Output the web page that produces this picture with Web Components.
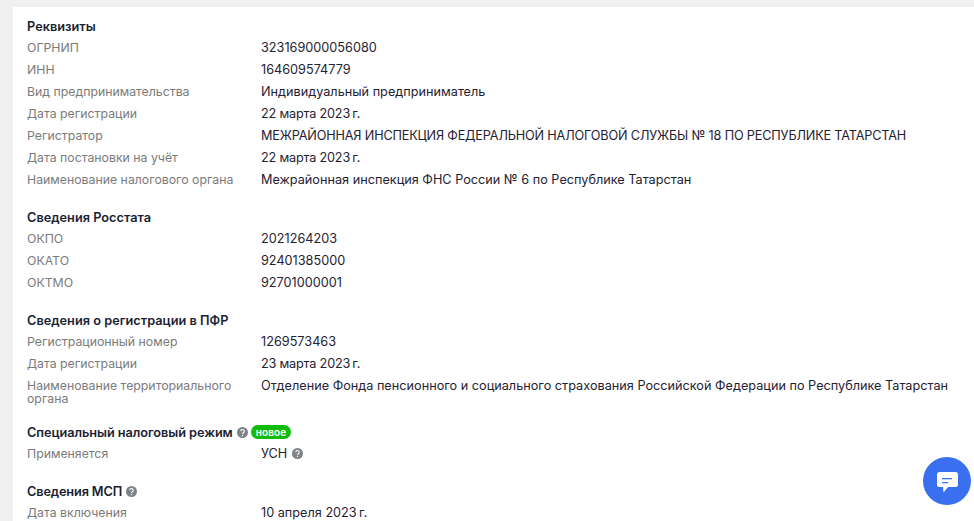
<!DOCTYPE html>
<html lang="ru">
<head>
<meta charset="utf-8">
<title>Реквизиты</title>
<style>
  html, body { margin: 0; height: 521px; overflow: hidden; background: #f0f0f0; }
  body { padding: 7px 0 0 13px; box-sizing: border-box; font-family: Inter, "Noto Sans", sans-serif; }
  .fecha { letter-spacing: -.2px; }
</style>
</head>
<body>
<info-card>
  <info-section titulo="Реквизиты">
    <info-row label="ОГРНИП">323169000056080</info-row>
    <info-row label="ИНН">164609574779</info-row>
    <info-row label="Вид предпринимательства">Индивидуальный предприниматель</info-row>
    <info-row label="Дата регистрации"><span class="fecha">22 марта 2023&#8201;г.</span></info-row>
    <info-row label="Регистратор"><span style="letter-spacing:-.17px">МЕЖРАЙОННАЯ ИНСПЕКЦИЯ ФЕДЕРАЛЬНОЙ НАЛОГОВОЙ СЛУЖБЫ № 18 ПО РЕСПУБЛИКЕ ТАТАРСТАН</span></info-row>
    <info-row label="Дата постановки на учёт"><span class="fecha">22 марта 2023&#8201;г.</span></info-row>
    <info-row label="Наименование налогового органа">Межрайонная инспекция ФНС России № 6 по Республике Татарстан</info-row>
  </info-section>
  <info-section titulo="Сведения Росстата">
    <info-row label="ОКПО">2021264203</info-row>
    <info-row label="ОКАТО">92401385000</info-row>
    <info-row label="ОКТМО">92701000001</info-row>
  </info-section>
  <info-section titulo="Сведения о регистрации в ПФР">
    <info-row label="Регистрационный номер">1269573463</info-row>
    <info-row label="Дата регистрации"><span class="fecha">23 марта 2023&#8201;г.</span></info-row>
    <info-row compacto label="Наименование территориального органа">Отделение Фонда пенсионного и социального страхования Российской Федерации по Республике Татарстан</info-row>
  </info-section>
  <info-section titulo="Специальный налоговый режим" style="--titulo-tracking:-.07px">
    <hint-icon slot="extra"></hint-icon>
    <new-badge slot="extra">новое</new-badge>
    <info-row label="Применяется">УСН <hint-icon></hint-icon></info-row>
  </info-section>
  <info-section titulo="Сведения МСП" style="--titulo-tracking:-.15px">
    <hint-icon slot="extra"></hint-icon>
    <info-row label="Дата включения">10 апреля 2023&#8201;г.</info-row>
  </info-section>
</info-card>
<chat-button></chat-button>

<script>
class InfoCard extends HTMLElement {
  constructor() {
    super();
    this.attachShadow({ mode: 'open' });
    this.shadowRoot.innerHTML = `
      <style>
        :host {
          display: flex;
          flex-direction: column;
          gap: 17px;
          background: #fff;
          height: 514px;
          padding: 9px 0 0 14px;
          box-sizing: border-box;
          overflow: hidden;
        }
      </style>
      <slot></slot>
    `;
  }
}

class InfoSection extends HTMLElement {
  constructor() {
    super();
    this.attachShadow({ mode: 'open' });
  }

  connectedCallback() {
    this.shadowRoot.innerHTML = `
      <style>
        :host { display: block; }
        .titulo {
          display: flex;
          align-items: center;
          gap: 3px;
          height: 20px;
          font-size: 12.75px;
          font-weight: 600;
          color: #1c1f33;
        }
        .texto { letter-spacing: var(--titulo-tracking, 0); }
      </style>
      <div class="titulo"><span class="texto">${this.getAttribute('titulo')}</span><slot name="extra"></slot></div>
      <slot></slot>
    `;
  }
}

class InfoRow extends HTMLElement {
  constructor() {
    super();
    this.attachShadow({ mode: 'open' });
  }

  connectedCallback() {
    this.shadowRoot.innerHTML = `
      <style>
        :host {
          display: grid;
          grid-template-columns: 234px 1fr;
          padding: 4.5px 0;
          font-size: 12.7px;
          line-height: 13px;
        }
        :host([compacto]) { padding-bottom: .5px; }
        .label { color: #7b7b7b; padding-right: 20px; font-size: 12.3px; }
        .valor { color: #1f2233; white-space: nowrap; }
      </style>
      <div class="label">${this.getAttribute('label')}</div>
      <div class="valor"><slot></slot></div>
    `;
  }
}

class HintIcon extends HTMLElement {
  constructor() {
    super();
    this.attachShadow({ mode: 'open' });
    this.shadowRoot.innerHTML = `
      <style>
        :host { display: inline-block; width: 11px; height: 11px; vertical-align: -1px; margin-left: 1px; }
        svg { display: block; }
      </style>
      <svg width="11" height="11" viewBox="0 0 11 11">
        <circle cx="5.500" cy="5.500" r="5.500" fill="#7d8288"/>
        <path d="M3.800 4.300a1.700 1.700 0 1 1 2.600 1.400c-.6.400-.9.600-.9 1.200" fill="none" stroke="#fff" stroke-width="1.100"/>
        <circle cx="5.500" cy="8.500" r=".7" fill="#fff"/>
      </svg>
    `;
  }
}

class NewBadge extends HTMLElement {
  constructor() {
    super();
    this.attachShadow({ mode: 'open' });
    this.shadowRoot.innerHTML = `
      <style>
        :host {
          display: inline-block;
          background: #10bd0e;
          color: #fff;
          font-size: 10px;
          font-weight: 600;
          line-height: 14px;
          letter-spacing: .15px;
          padding: 0 5px;
          border-radius: 7px;
        }
      </style>
      <slot></slot>
    `;
  }
}

class ChatButton extends HTMLElement {
  constructor() {
    super();
    this.attachShadow({ mode: 'open' });
    this.shadowRoot.innerHTML = `
      <style>
        :host {
          position: fixed;
          left: 923px;
          top: 457px;
          width: 48px;
          height: 48px;
          border-radius: 50%;
          background: #3a6ff0;
          display: flex;
          align-items: center;
          justify-content: center;
        }
        svg { margin-top: 2px; }
      </style>
      <svg width="21" height="21" viewBox="0 0 21 21">
        <path d="M2.500 0h16A2.500 2.500 0 0 1 21 2.500v10a2.500 2.500 0 0 1-2.500 2.500H11l-4.500 5.500L6 15H2.500A2.500 2.500 0 0 1 0 12.500v-10A2.500 2.500 0 0 1 2.500 0z" fill="#fff"/>
        <rect x="5" y="6" width="10" height="1.300" fill="#3a6ff0"/>
        <rect x="5" y="10" width="6" height="1.300" fill="#3a6ff0"/>
      </svg>
    `;
  }
}

customElements.define('info-card', InfoCard);
customElements.define('info-section', InfoSection);
customElements.define('info-row', InfoRow);
customElements.define('hint-icon', HintIcon);
customElements.define('new-badge', NewBadge);
customElements.define('chat-button', ChatButton);
</script>
</body>
</html>
